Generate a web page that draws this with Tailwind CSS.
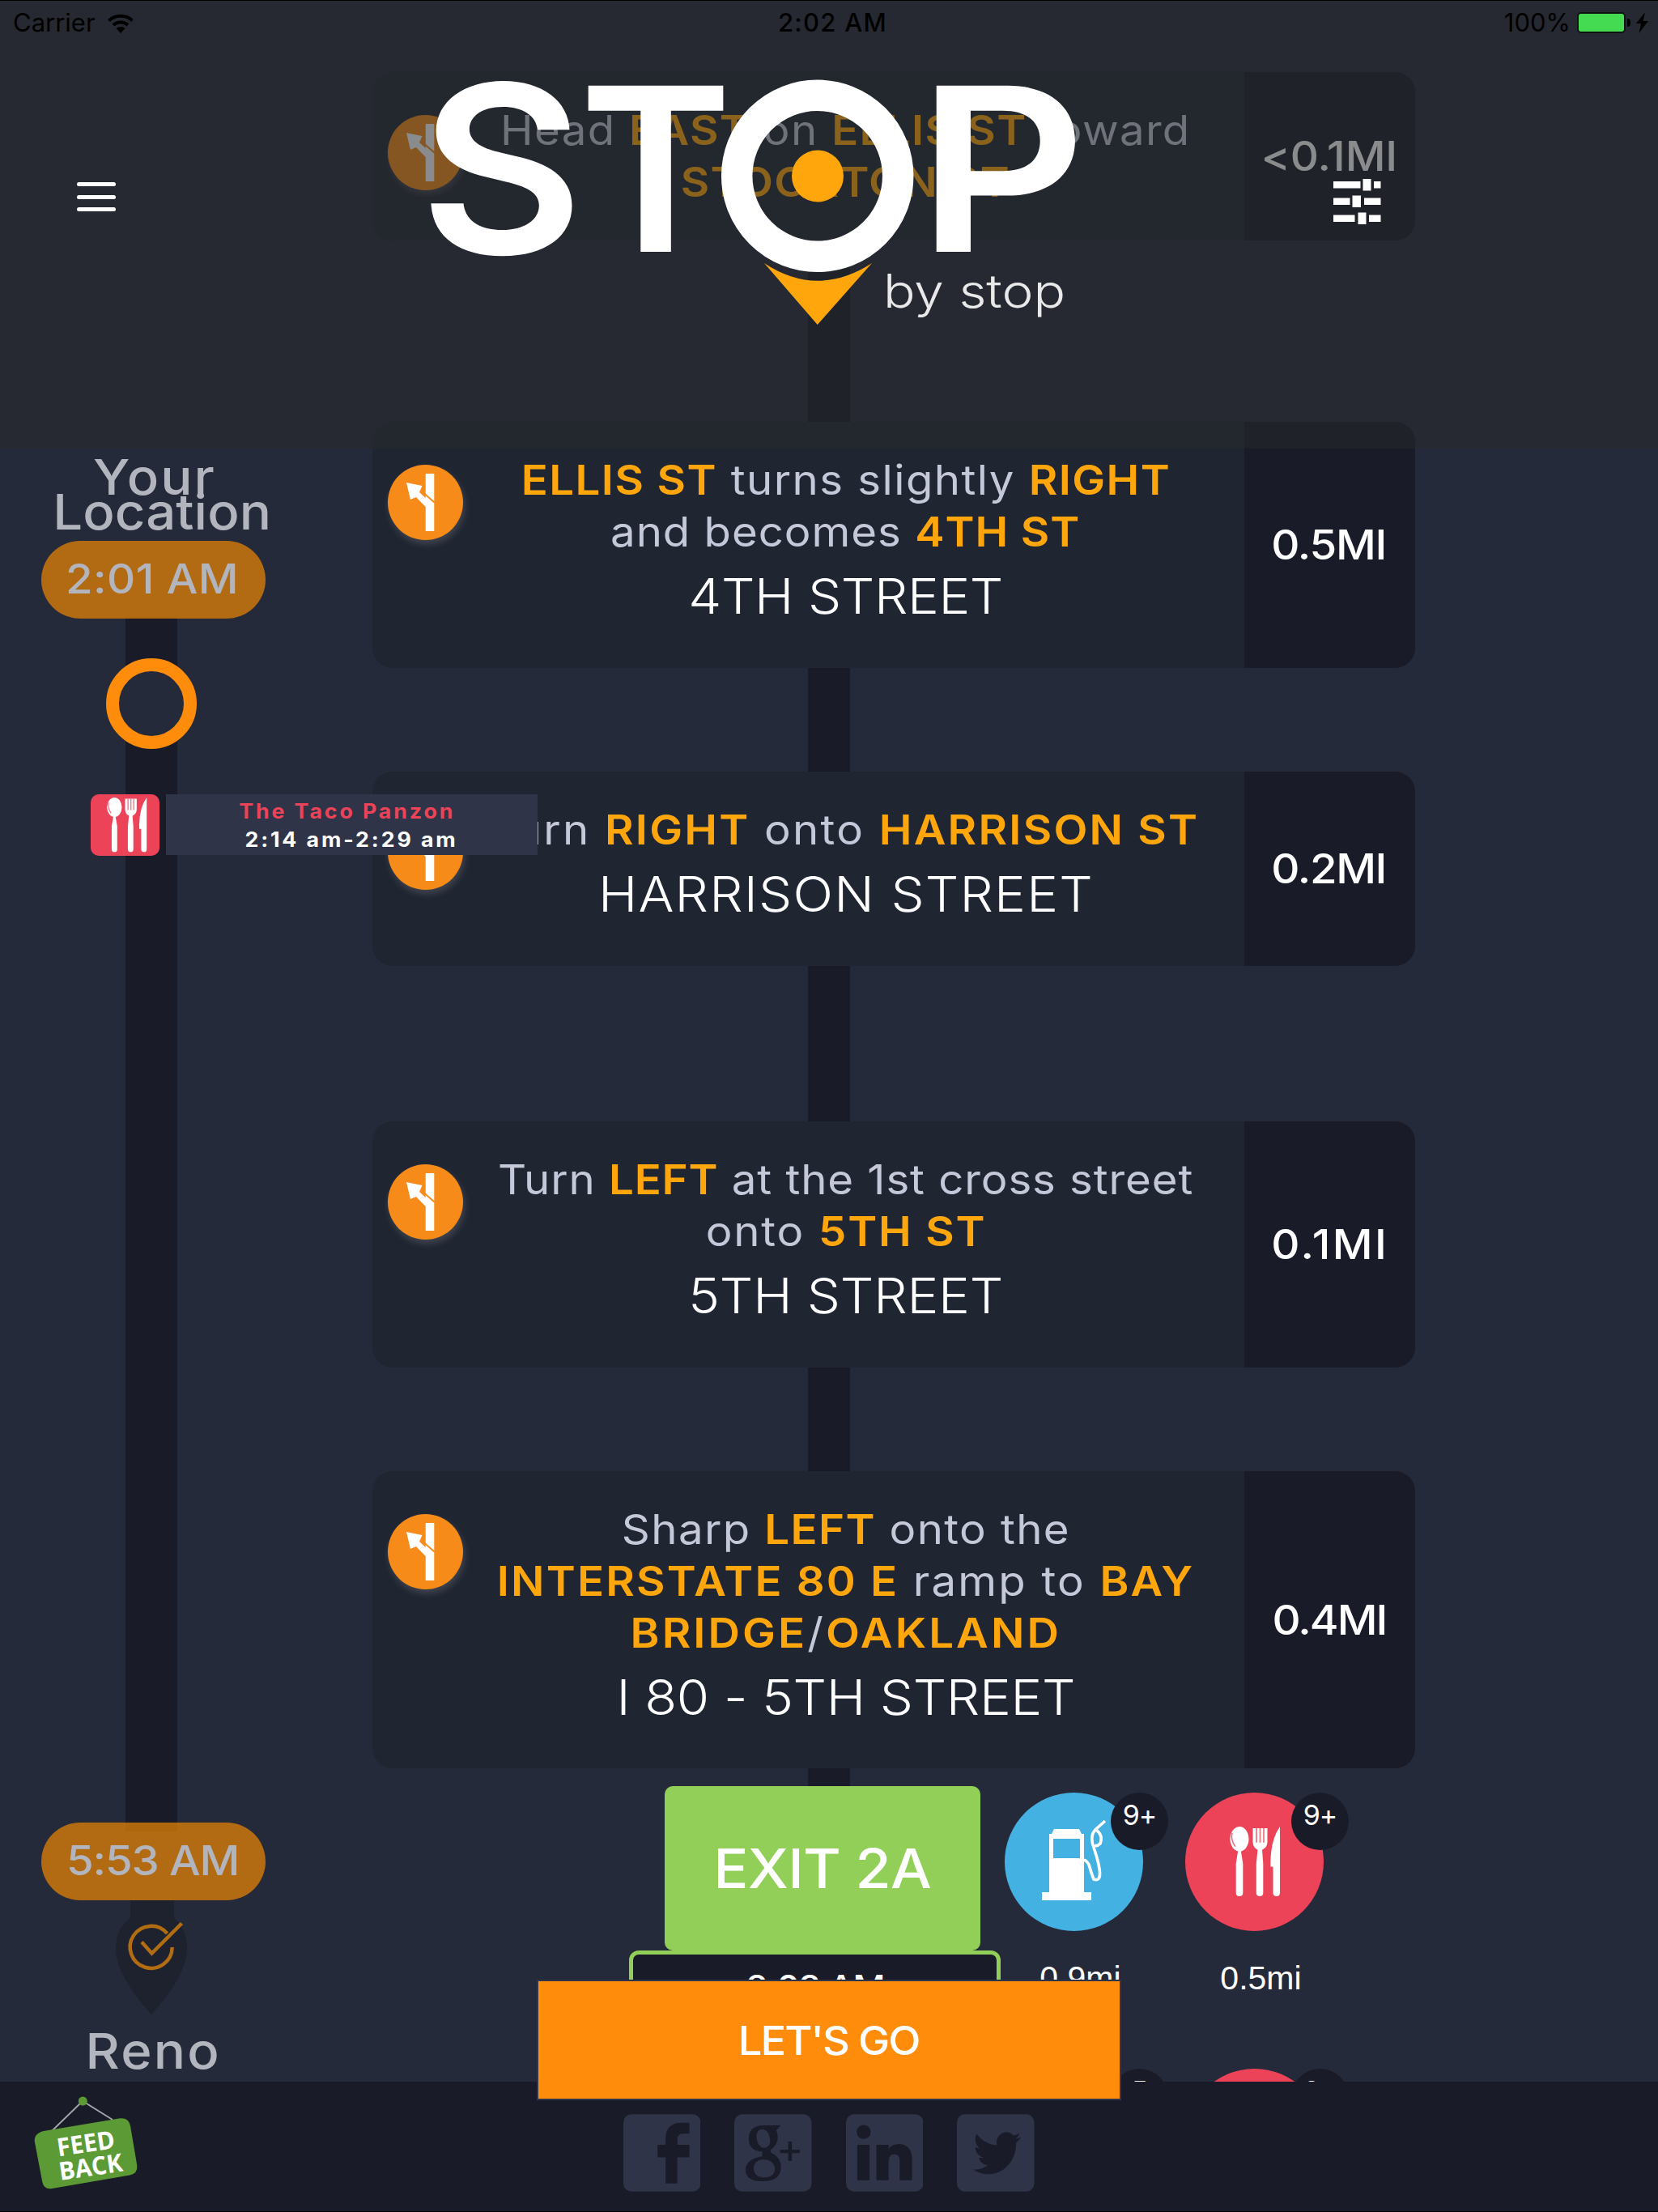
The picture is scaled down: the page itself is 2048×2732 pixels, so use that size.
<!DOCTYPE html>
<html lang="en">
<head>
<meta charset="utf-8">
<title>Stop by stop</title>
<script src="https://cdn.jsdelivr.net/npm/@tailwindcss/browser@4"></script>
</head>
<body class="relative h-[2732px] w-[2048px] overflow-hidden bg-[#252a3a] font-['Inter',sans-serif] text-white">

<svg class="hidden">
  <symbol id="turn" viewBox="0 0 93 93">
    <path d="M46.700 11h10.600v71H46.700V52L35 40l-7 3-5-21 19.500 4-3.500 8 7.700 7z" fill="#fff"/>
    <path d="M45 35.500l13 11.500" stroke="#f68b1a" stroke-width="2"/>
  </symbol>
  <symbol id="utensils" viewBox="0 0 64 88" preserveAspectRatio="none">
    <g fill="#fff">
      <ellipse cx="13" cy="15.500" rx="11.500" ry="15.500"/>
      <path d="M11.300 30h3.400l2.600 16v37q0 4-4.300 4t-4.300-4V46z"/>
      <path d="M29.500 2h18v17q0 7-6.500 10l1.300 17v37q0 4-4.200 4t-4.300-4V46l1.700-17q-6-3-6-10z"/>
      <path d="M63 0v83q0 4-4.200 4t-4.300-4V50h-3q-1-32 11.500-50z"/>
    </g>
    <path d="M34 2v18M38.500 2v18M43 2v18" stroke="#ec4358" stroke-width="1.800" opacity=".7"/>
    <path d="M4 8q-2 9 4 17" fill="none" stroke="#ec4358" stroke-width="1.500" opacity=".8"/>
  </symbol>
</svg>

<!-- trip timeline -->
<aside class="absolute left-0 top-0 z-20 h-[2571px] w-[379px] pt-[568px]">
  <div class="absolute left-[155px] top-[763px] -z-10 h-[1499px] w-16 bg-[#191b28]"></div>
  <div class="flex flex-col items-center font-medium">
    <div class="ml-0.5 text-[61px] leading-[43px] whitespace-nowrap text-[#b2b5be]"><span class="inline-block scale-x-107 tracking-[1.9px]">Your</span></div>
    <div class="ml-[22px] text-[61px] leading-[43px] whitespace-nowrap text-[#b2b5be]"><span class="inline-block scale-x-107 tracking-[0.1px]">Location</span></div>
    <div class="mt-[13.500px] flex h-24 w-[277px] items-center justify-center rounded-full bg-[#ee8801]/70 text-[51px] text-[#b2b5be]"><span class="-ml-0.5 inline-block scale-x-107 tracking-[0.4px]">2:01 AM</span></div>
    <div class="mt-[49px] mr-1.5 size-28 rounded-full border-[16px] border-[#ff8c0a] bg-[#252a3a]"></div>
  </div>
  <div class="mt-14 ml-28 flex w-[552px]">
    <div class="flex h-[76px] w-[85px] items-center justify-center rounded-[10px] bg-[#ec4358]"><svg class="mt-px ml-1 h-[68px] w-[51px]"><use href="#utensils"/></svg></div>
    <div class="ml-2 flex h-[75px] w-[459px] flex-col items-center pt-1 text-[25px] leading-[35px] font-bold whitespace-nowrap bg-[#2f3448]">
      <div class="-ml-3 text-[#ec4358]"><span class="inline-block scale-x-107 tracking-[2.700px]">The Taco Panzon</span></div>
      <div><span class="inline-block scale-x-107 tracking-[2.700px]">2:14 am-2:29 am</span></div>
    </div>
  </div>
  <div class="mt-[1194px] flex flex-col items-center font-medium text-[#b2b5be]">
    <div class="flex h-24 w-[277px] items-center justify-center rounded-full bg-[#ee8801]/70 text-[51px]"><span class="-ml-0.5 inline-block scale-x-107 tracking-[-1.100px]">5:53 AM</span></div>
    <svg class="mr-1.5 h-[142px] w-24" viewBox="0 0 96 142">
      <path d="M22 0h54v22q16 13 16 38Q92 92 48 141 4 92 4 60q0-25 18-38z" fill="#1e212e"/>
      <g fill="none" stroke="#b26c12" stroke-width="4.500">
        <path d="M67.500 41A26 26 0 1 0 73.700 58"/>
        <path d="M36 51.500L48.500 65.500 85.500 28.500"/>
      </g>
    </svg>
    <div class="mt-3 text-[61px] leading-[64px]"><span class="inline-block scale-x-107 tracking-[2.100px]">Reno</span></div>
  </div>
</aside>

<!-- directions -->
<main class="absolute left-[460px] top-0 h-[2571px] w-[1288px] overflow-hidden pt-[89px] text-center text-[51px] leading-[64px] font-[440] whitespace-nowrap text-[#c5c8d9]">
  <div class="absolute left-[538px] top-[89px] -z-10 h-[2200px] w-[52px] bg-[#191b28]"></div>

  <section class="flex h-[208px] overflow-hidden rounded-[25px] bg-[#202532]">
    <div class="mt-[53px] ml-[19px] size-[93px] shrink-0 rounded-full bg-[#f68b1a] shadow-[2px_5px_8px_#ffffff26]"><svg class="size-full"><use href="#turn"/></svg></div>
    <div class="flex w-[965px] flex-col items-center pt-10 pr-5">
      <div class="scale-x-107 tracking-[1.250px]">Head <b class="font-semibold text-[#ffa60d]">EAST</b> on <b class="font-semibold text-[#ffa60d]">ELLIS ST</b> toward</div>
      <div class="scale-x-107 font-semibold tracking-[1.200px] text-[#ffa60d]">STOCKTON ST</div>
    </div>
    <div class="flex flex-1 items-center justify-center bg-[#191b28] font-medium text-white"><span class="-ml-0.5 inline-block scale-x-107 tracking-[-0.100px]">&lt;0.1MI</span></div>
  </section>

  <section class="mt-[224px] flex h-[304px] overflow-hidden rounded-[25px] bg-[#202532]">
    <div class="mt-[53px] ml-[19px] size-[93px] shrink-0 rounded-full bg-[#f68b1a] shadow-[2px_5px_8px_#ffffff26]"><svg class="size-full"><use href="#turn"/></svg></div>
    <div class="flex w-[965px] flex-col items-center pt-10 pr-5">
      <div class="scale-x-107 tracking-[1.350px]"><b class="font-semibold text-[#ffa60d]">ELLIS ST</b> turns slightly <b class="font-semibold text-[#ffa60d]">RIGHT</b></div>
      <div class="scale-x-107 tracking-[0.900px]">and becomes <b class="font-semibold text-[#ffa60d]">4TH ST</b></div>
      <div class="scale-x-107 text-[61px] leading-[94px] font-light tracking-[-0.360px] text-white">4TH STREET</div>
    </div>
    <div class="flex flex-1 items-center justify-center bg-[#191b28] font-medium text-white"><span class="-ml-0.5 inline-block scale-x-107 tracking-[-1.200px]">0.5MI</span></div>
  </section>

  <section class="mt-32 flex h-[240px] overflow-hidden rounded-[25px] bg-[#202532]">
    <div class="mt-[53px] ml-[19px] size-[93px] shrink-0 rounded-full bg-[#f68b1a] shadow-[2px_5px_8px_#ffffff26]"><svg class="size-full"><use href="#turn"/></svg></div>
    <div class="flex w-[965px] flex-col items-center pt-10 pr-5">
      <div class="-ml-1 scale-x-107 tracking-[2.100px]">Turn <b class="font-semibold text-[#ffa60d]">RIGHT</b> onto <b class="font-semibold text-[#ffa60d]">HARRISON ST</b></div>
      <div class="scale-x-107 text-[61px] leading-[94px] font-light tracking-[1.100px] text-white">HARRISON STREET</div>
    </div>
    <div class="flex flex-1 items-center justify-center bg-[#191b28] font-medium text-white"><span class="-ml-0.5 inline-block scale-x-107 tracking-[-1.300px]">0.2MI</span></div>
  </section>

  <section class="mt-48 flex h-[304px] overflow-hidden rounded-[25px] bg-[#202532]">
    <div class="mt-[53px] ml-[19px] size-[93px] shrink-0 rounded-full bg-[#f68b1a] shadow-[2px_5px_8px_#ffffff26]"><svg class="size-full"><use href="#turn"/></svg></div>
    <div class="flex w-[965px] flex-col items-center pt-10 pr-5">
      <div class="scale-x-107 tracking-[0.850px]">Turn <b class="font-semibold text-[#ffa60d]">LEFT</b> at the 1st cross street</div>
      <div class="scale-x-107 tracking-[1.700px]">onto <b class="font-semibold text-[#ffa60d]">5TH ST</b></div>
      <div class="scale-x-107 text-[61px] leading-[94px] font-light tracking-[-0.120px] text-white">5TH STREET</div>
    </div>
    <div class="flex flex-1 items-center justify-center bg-[#191b28] font-medium text-white"><span class="inline-block scale-x-107 tracking-[2.300px]">0.1MI</span></div>
  </section>

  <section class="mt-32 flex h-[367px] overflow-hidden rounded-[25px] bg-[#202532]">
    <div class="mt-[53px] ml-[19px] size-[93px] shrink-0 rounded-full bg-[#f68b1a] shadow-[2px_5px_8px_#ffffff26]"><svg class="size-full"><use href="#turn"/></svg></div>
    <div class="flex w-[965px] flex-col items-center pt-10 pr-5">
      <div class="scale-x-107 tracking-[1.300px]">Sharp <b class="font-semibold text-[#ffa60d]">LEFT</b> onto the</div>
      <div class="scale-x-107 tracking-[2.050px]"><b class="font-semibold text-[#ffa60d]">INTERSTATE 80 E</b> ramp to <b class="font-semibold text-[#ffa60d]">BAY</b></div>
      <div class="scale-x-107 tracking-[2.900px]"><b class="font-semibold text-[#ffa60d]">BRIDGE</b>/<b class="font-semibold text-[#ffa60d]">OAKLAND</b></div>
      <div class="scale-x-107 text-[61px] leading-[94px] font-light tracking-[-0.300px] text-white">I 80 - 5TH STREET</div>
    </div>
    <div class="flex flex-1 items-center justify-center bg-[#191b28] font-medium text-white"><span class="-ml-0.5 inline-block scale-x-107 tracking-[-1.800px]">0.4MI</span></div>
  </section>

  <section class="mt-[22px] ml-[317px] flex font-normal text-white">
    <div class="flex w-[459px] flex-col font-medium">
      <div class="ml-11 flex h-[203px] w-[390px] items-center justify-center rounded-[10px] bg-[#92cf58] text-[67px]"><span class="inline-block scale-x-107 tracking-[-0.660px]">EXIT 2A</span></div>
      <div class="h-[110px] rounded-xl border-[5px] border-[#92cf58] bg-[#191b28] pt-2 text-[41px]"><span class="inline-block scale-x-107 tracking-[-1.080px]">2:03 AM</span></div>
    </div>
    <div class="ml-[5px] grid grid-cols-[171px_171px] gap-x-[52px] pt-2 font-['Liberation_Sans',sans-serif]">
      <div class="relative h-[341px]">
        <div class="flex h-[171px] items-center justify-center rounded-full bg-[#44b1e3]">
          <svg class="size-full" viewBox="0 0 171 171">
            <path d="M46 133v-10h9V51h3l3-6h31l3 6h3v72h9v10zM60 57v24h33V57z" fill="#fff" fill-rule="evenodd"/>
            <path d="M97 83q6 1 8 9t5 15q8 3 7.500-8T110 68q-6-16 4-24l10-9M113 46q9 7 5 17-4 4-7 2" fill="none" stroke="#fff" stroke-width="3.600"/>
          </svg>
        </div>
        <div class="absolute -right-[31px] top-0 size-[71px] rounded-full bg-[#191b28] font-['Inter',sans-serif] text-[34px] leading-[56px] tracking-[-1px]">9+</div>
        <div class="mt-7 ml-4 text-[41px] leading-[60px]">0.9mi</div>
      </div>
      <div class="relative h-[341px]">
        <div class="flex h-[171px] items-center justify-center rounded-full bg-[#ec4358]"><svg class="h-[87px] w-16"><use href="#utensils"/></svg></div>
        <div class="absolute -right-[31px] top-0 size-[71px] rounded-full bg-[#191b28] font-['Inter',sans-serif] text-[34px] leading-[56px] tracking-[-1px]">9+</div>
        <div class="mt-7 ml-4 text-[41px] leading-[60px]">0.5mi</div>
      </div>
      <div class="relative h-[341px]">
        <div class="h-[171px] rounded-full bg-[#44b1e3]"></div>
        <div class="absolute -right-[31px] top-0 size-[71px] rounded-full bg-[#191b28] font-['Inter',sans-serif] text-[34px] leading-[56px]">5</div>
      </div>
      <div class="relative h-[341px]">
        <div class="h-[171px] rounded-full bg-[#ec4358]"></div>
        <div class="absolute -right-[31px] top-0 size-[71px] rounded-full bg-[#191b28] font-['Inter',sans-serif] text-[34px] leading-[56px] tracking-[-1px]">9+</div>
      </div>
    </div>
  </section>
</main>

<!-- translucent header -->
<header class="absolute inset-x-0 top-0 z-30 h-[554px] border-t border-black bg-[#27292a]/54">
  <div class="flex h-[65px] items-start justify-between pr-3 pl-4 text-[31px] leading-[54px] text-black">
    <div class="flex w-[700px] items-center">Carrier
      <svg class="mt-0.5 ml-[15px] h-6 w-8" viewBox="0 0 32 24" fill="none" stroke="#000" stroke-width="4"><path d="M1.500 8.500a21 21 0 0 1 29 0M7 14a13 13 0 0 1 18 0"/><path d="M16 24l-5.500-6q5.500-4 11 0z" fill="#000" stroke="none"/></svg>
    </div>
    <div class="ml-[5px] font-medium tracking-[1.300px]">2:02 AM</div>
    <div class="flex w-[700px] items-center justify-end">100%
      <div class="ml-2 h-[26px] w-[60px] rounded-[5px] border-2 border-[#111] bg-[#44db53]"></div>
      <div class="ml-0.5 h-2.5 w-1 rounded-r-full bg-black"></div>
      <svg class="ml-[7px] h-[26px] w-[15px]" viewBox="0 0 15 26"><path d="M11 0L0 14h6L3.500 26 15 11H8.500z"/></svg>
    </div>
  </div>
  <div class="flex items-start">
    <div class="mt-[159px] ml-[95px] flex w-12 flex-col gap-[10.500px]">
      <div class="h-[5px] rounded-sm bg-white"></div><div class="h-[5px] rounded-sm bg-white"></div><div class="h-[5px] rounded-sm bg-white"></div>
    </div>
    <svg class="mt-[29px] ml-[387px] h-[310px] w-[800px]" viewBox="530 95 800 310">
      <g fill="#fff" font-family="Inter" font-weight="600" font-size="282">
        <text x="518" y="313" font-size="289" textLength="203" lengthAdjust="spacingAndGlyphs">S</text>
        <text x="715" y="311" textLength="190" lengthAdjust="spacingAndGlyphs">T</text>
        <text x="1133" y="311" textLength="209" lengthAdjust="spacingAndGlyphs">P</text>
      </g>
      <circle cx="1009.700" cy="217.300" r="99.500" fill="none" stroke="#fff" stroke-width="38.500"/>
      <circle cx="1010" cy="217.500" r="32" fill="#ffa60d"/>
      <path d="M944 325q65.700 43.500 133 0l-67.300 76z" fill="#ffa60d"/>
      <text x="1091" y="380" font-family="Inter" font-weight="300" font-size="57" fill="#e9e9ea" textLength="225" lengthAdjust="spacingAndGlyphs">by stop</text>
    </svg>
    <svg class="mt-[154px] ml-[316px] h-[58px] w-[60px]" viewBox="0 0 60 58" fill="#fff">
      <path d="M1 4h33.500v8.500H1zM37.500 1h10v14.500h-10zM51 4h8.500v8.500H51zM1 24.500h20.500V33H1zM24.500 21.500h10.500V36H24.500zM39 24.500h20.500V33H39zM1 45.500h26.500V54H1zM31.500 42.500h10V57h-10zM45 45.500h14.500V54H45z"/>
    </svg>
  </div>
</header>

<!-- social footer -->
<footer class="absolute inset-x-0 bottom-0 z-30 h-[161px] border-b border-black bg-[#191b28]">
  <svg class="absolute left-[40px] top-[15px] h-[120px] w-[132px]" viewBox="40 2586 132 120">
    <path d="M64 2632l38-37 37 23" fill="none" stroke="#a5a6ab" stroke-width="1.800"/>
    <circle cx="102.300" cy="2595" r="5.500" fill="#5c9a35"/>
    <path d="M54 2632l93-15.500q12-1.500 14 9l8.300 49q1 10-9 12l-96 16.500q-10 1.500-12-8l-9.500-50q-1-10 11.200-13z" fill="#5c9a35"/>
    <g fill="#fff" font-family="Open Sans" font-weight="700" font-size="31">
      <text transform="translate(72 2663.500) rotate(-8.500)" textLength="72" lengthAdjust="spacingAndGlyphs">FEED</text>
      <text transform="translate(74.500 2693) rotate(-8.500)" textLength="79" lengthAdjust="spacingAndGlyphs">BACK</text>
    </g>
  </svg>
  <div class="flex gap-[42px] pt-10 pl-[769.500px]">
    <svg class="h-24 w-[95.500px]" viewBox="0 0 96 96"><rect width="96" height="96" rx="10" fill="#2f3448"/><path d="M82 10.500V24H74q-7 0-7 7v7h15v15.500H67V86H52.500V53.500h-10V38h10V30q0-19.500 20-19.500z" fill="#191b28"/></svg>
    <svg class="h-24 w-[95.500px]" viewBox="0 0 96 96"><rect width="96" height="96" rx="10" fill="#2f3448"/>
      <g fill="#191b28" fill-rule="evenodd">
        <path d="M36 13.700H57.500L52 20q2 3 2 9 0 9-9 15.500v3q13 6 13 18Q58 83 35 83.300 14 83 14 69q0-13 21-17l-.5-5.700Q18 46 18 30 18 14 36 13.700zM34.500 18.500Q27.500 19 27.500 28q1 13 9.500 14 7.500-1 7.500-9-1-14-10-14.500zM36 56Q24 57 24 68q1 10 13.500 10.500Q50 78 50.500 68 50 57 36 56z"/>
        <path d="M67 34h4.500v10h10v4.300h-10V58H67v-9.700H57V44h10z"/>
      </g></svg>
    <svg class="h-24 w-[95.500px]" viewBox="0 0 96 96"><rect width="96" height="96" rx="10" fill="#2f3448"/><g fill="#191b28"><circle cx="22" cy="22" r="8.700"/><path d="M14 38h15.200v44H14zM37.700 38H53v5.500q4-6.500 13-6.500 16 1 16 19v26H66.600V57q0-7-6.500-7.500-7 .5-7.200 8.500v24H37.700z"/></g></svg>
    <svg class="h-24 w-[95.500px]" viewBox="0 0 96 96"><rect width="96" height="96" rx="10" fill="#2f3448"/><path transform="translate(20.500 16.300) scale(2.460 2.670)" fill="#191b28" d="M23.953 4.570a10 10 0 01-2.825.775 4.958 4.958 0 002.163-2.723c-.951.555-2.005.959-3.127 1.184a4.920 4.920 0 00-8.384 4.482C7.690 8.095 4.067 6.130 1.640 3.162a4.822 4.822 0 00-.666 2.475c0 1.710.870 3.213 2.188 4.096a4.904 4.904 0 01-2.228-.616v.06a4.923 4.923 0 003.946 4.827 4.996 4.996 0 01-2.212.085 4.936 4.936 0 004.604 3.417 9.867 9.867 0 01-6.102 2.105c-.390 0-.779-.023-1.170-.067a13.995 13.995 0 007.557 2.209c9.053 0 13.998-7.496 13.998-13.985 0-.210 0-.420-.015-.630A9.935 9.935 0 0024 4.590z"/></svg>
  </div>
</footer>

<button class="absolute left-[663px] top-[2445px] z-40 flex h-[149px] w-[722px] items-center justify-center border-2 border-[#2f3448] bg-[#ff8c0a] pt-0.5 text-[49px] font-medium"><span class="inline-block scale-x-107 tracking-[-1.770px]">LET'S GO</span></button>

</body>
</html>
